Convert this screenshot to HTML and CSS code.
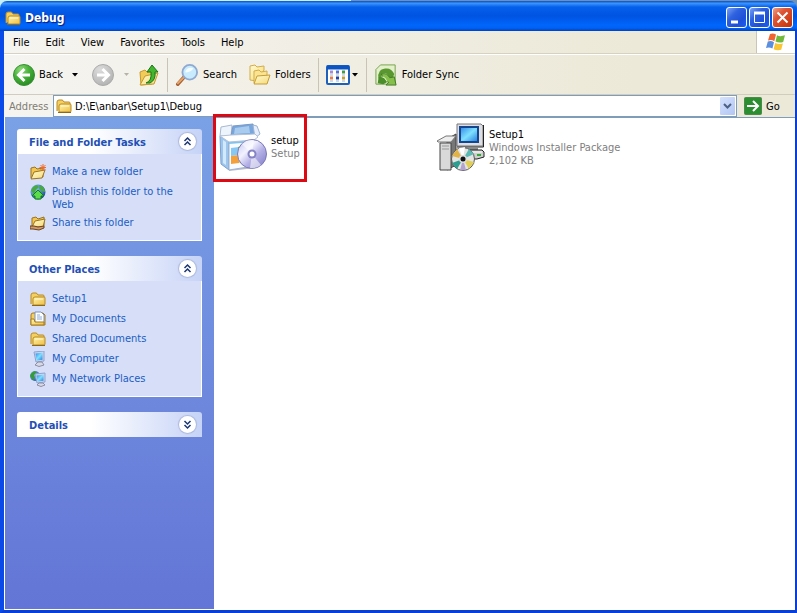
FILE: index.html
```html
<!DOCTYPE html>
<html lang="en">
<head>
<meta charset="utf-8">
<title>Debug</title>
<link rel="stylesheet" href="styles.css">
</head>
<body>
<svg class="defs" aria-hidden="true">
  <defs>
    <linearGradient id="gold" x1="0" y1="0" x2="1" y2="1"><stop offset="0" stop-color="#fff3a8"/><stop offset="1" stop-color="#eebf45"/></linearGradient>
    <linearGradient id="pale" x1="0" y1="0" x2="1" y2="1"><stop offset="0" stop-color="#fffbd0"/><stop offset="1" stop-color="#f5d977"/></linearGradient>
    <radialGradient id="green" cx=".35" cy=".25" r=".8"><stop offset="0" stop-color="#8edb78"/><stop offset=".5" stop-color="#46b038"/><stop offset="1" stop-color="#268a22"/></radialGradient>
    <radialGradient id="grey" cx=".35" cy=".25" r=".8"><stop offset="0" stop-color="#dcdcdc"/><stop offset="1" stop-color="#b2b2b2"/></radialGradient>
    <radialGradient id="globe" cx=".3" cy=".3" r=".8"><stop offset="0" stop-color="#8fd0ff"/><stop offset="1" stop-color="#1b4c9c"/></radialGradient>
    <linearGradient id="screen" x1="0" y1="0" x2="1" y2="1"><stop offset="0" stop-color="#2f86e8"/><stop offset=".5" stop-color="#7fe0ff"/><stop offset="1" stop-color="#2078dc"/></linearGradient>
    <linearGradient id="disc" x1="0" y1="0" x2="1" y2="1"><stop offset="0" stop-color="#c3c2ee"/><stop offset=".35" stop-color="#f2f2ff"/><stop offset=".6" stop-color="#b4b0e6"/><stop offset="1" stop-color="#7d79c4"/></linearGradient>
    <symbol id="folder" viewBox="0 0 16 16">
      <path d="M1 13V4q0-2 2-2h3q1 0 2 2h5q1 0 1 1v2" fill="#f5cf60" stroke="#b98a25"/>
      <path d="M3 14V8q0-2 2-2h9q1 0 1 1v6q0 1-1 1z" fill="url(#gold)" stroke="#b98a25"/>
      <path d="M2 14.500h13" stroke="#8d6a1a"/>
      <path d="M5 8h8" stroke="#fffbd8"/>
    </symbol>
    <symbol id="computer" viewBox="0 0 16 16">
      <path d="M4 1l10-1v10l-8 1z" fill="#c8d5ee" stroke="#8ea2d0"/>
      <path d="M5.500 2.500l7-.7v7l-6 .8z" fill="url(#screen)"/>
      <path d="M8 11h4l2 3-5 1.500-4-1.500z" fill="#d8d9e6" stroke="#8d8da5"/>
    </symbol>
  </defs>
</svg>

<div class="window">
  <header class="titlebar">
    <svg class="i16"><use href="#folder"/></svg>
    <h1>Debug</h1>
    <div class="controls">
      <button class="ctl" aria-label="Minimize"><svg viewBox="0 0 19 19"><path d="M4 14h7" stroke="#fff" stroke-width="3"/></svg></button>
      <button class="ctl" aria-label="Maximize"><svg viewBox="0 0 19 19"><path d="M4.500 5v9.500h10V5" fill="none" stroke="#fff"/><path d="M4 5h11" stroke="#fff" stroke-width="3"/></svg></button>
      <button class="ctl close" aria-label="Close"><svg viewBox="0 0 19 19"><path d="M4.500 4.500l10 10M14.500 4.500l-10 10" stroke="#fff" stroke-width="2"/></svg></button>
    </div>
  </header>

  <div class="frame">
    <nav class="menubar" aria-label="Menu">
      <button>File</button><button>Edit</button><button>View</button><button>Favorites</button><button>Tools</button><button>Help</button>
      <div class="brand">
        <svg viewBox="0 0 20 18">
          <path d="M4 1q3-1.500 6 .6L8.300 8.200Q5.500 6 2 7.500z" fill="#ef6430"/>
          <path d="M11 2.200Q14 4 19 2.300L17.200 9q-4 1.300-7.700-.4z" fill="#71b93a"/>
          <path d="M1.800 8.600Q5 7.300 8 9.300L6.400 15.600Q3.500 13.800 0 15z" fill="#5a8fe0"/>
          <path d="M9.200 9.900q3.500 1.800 7.700.6L15.200 16.800q-4 1.200-7.600-.6z" fill="#f8c537"/>
        </svg>
      </div>
    </nav>

    <div class="toolbar" role="toolbar" aria-label="Standard buttons">
      <button class="tool"><svg class="i22" viewBox="0 0 22 22"><circle cx="11" cy="11" r="10.500" fill="url(#green)" stroke="#3a8f35"/><path d="M17 11H6M11.500 5L5.500 11l6 6" fill="none" stroke="#fff" stroke-width="3"/></svg>Back</button>
      <button class="drop" aria-label="Back history"><svg class="arrow" viewBox="0 0 7 4"><path d="M0 0h6L3 3.500z" fill="#000"/></svg></button>
      <button class="tool forward" aria-label="Forward" disabled><svg class="i22" viewBox="0 0 22 22"><circle cx="11" cy="11" r="10.500" fill="url(#grey)" stroke="#aaa"/><path d="M5 11h11M10.500 5l6 6-6 6" fill="none" stroke="#fff" stroke-width="3"/></svg></button>
      <button class="drop" aria-label="Forward history" disabled><svg class="arrow" viewBox="0 0 7 4"><path d="M1 0h5L3.500 3z" fill="#b5b3a8"/></svg></button>
      <button class="tool" aria-label="Up"><svg class="i22" viewBox="0 0 22 22"><path d="M2 8l5-2 2 2 8-1-3 13-11 1z" fill="#f1cc58" stroke="#c6992d"/><path d="M2 21l5-9 13-3-4 11z" fill="url(#pale)" stroke="#c6992d"/><path d="M8 19q6-2 5-11h-4L14 1l6 7h-3q1 8-5 11z" fill="#43b52f" stroke="#187617"/></svg></button>
      <span class="sep"></span>
      <button class="tool"><svg class="i24" viewBox="0 0 24 24"><path d="M9 14l-7 8" stroke="#a66032" stroke-width="4" stroke-linecap="round"/><path d="M9 14l-7 7" stroke="#e6a66b" stroke-width="2" stroke-linecap="round"/><circle cx="15" cy="9" r="8" fill="#c8ebfd" stroke="#8fa9d0" stroke-width="2"/><path d="M10 9q1-5 6-5 2 0 3 1-4 5-9 4z" fill="#f6fdff"/></svg>Search</button>
      <button class="tool folders"><svg class="i22" viewBox="0 0 22 22"><path d="M1 16V2l5-1 2 2 7-1v4l-7 11z" fill="url(#pale)" stroke="#d3ac48"/><path d="M5 19V7l5-1 2 2 6-1v4l-7 8z" fill="#fae491" stroke="#d3ac48"/><path d="M5 20l3-8 13-1-3 9z" fill="url(#pale)" stroke="#c79d36"/></svg>Folders</button>
      <span class="sep"></span>
      <button class="tool views" aria-label="Views"><svg class="i24" viewBox="0 0 24 20"><rect x="1" y="1" width="22" height="18" rx="1" fill="#fff" stroke="#1e61bb" stroke-width="2"/><path d="M1 2.500h22" stroke="#0c54c4" stroke-width="4"/><path d="M4 7h3" stroke="#a48bd2" stroke-width="3"/><path d="M10 7h3" stroke="#5970d0" stroke-width="3"/><path d="M16 7h3" stroke="#3f9d45" stroke-width="3"/><path d="M4 13h3" stroke="#e37d56" stroke-width="3"/><path d="M10 13h3" stroke="#2442a4" stroke-width="3"/><path d="M16 13h3" stroke="#bda13c" stroke-width="3"/><path d="M4 10h3m3 0h3m3 0h3M4 16h3m3 0h3m3 0h3" stroke="#9fb3c5"/></svg><svg class="arrow" viewBox="0 0 7 4"><path d="M0 0h6L3 3.500z" fill="#000"/></svg></button>
      <span class="sep"></span>
      <button class="tool"><svg class="i24" viewBox="0 0 24 24"><path d="M1 22V6l5-5h16v21z" fill="#e4efcc" stroke="#6d9f43"/><path d="M4 16q-2-10 7-11 7-1 10 6l-2 5-4-2q-2-5-6-4-3 1-1 7z" fill="#58982f"/><path d="M7 11q6-2 9 4l5-1 2 9H12l3-3q-5-1-8-9z" fill="#86bf4b" stroke="#3e7722"/><path d="M3 21l1-7 5 1 4 5-4 2z" fill="#4a8d2a"/><path d="M8 14q3 0 5 5" fill="none" stroke="#e8f6cf"/></svg>Folder Sync</button>
    </div>

    <form class="address" onsubmit="return false">
      <label for="path">Address</label>
      <div class="combo">
        <svg class="i16"><use href="#folder"/></svg>
        <input id="path" type="text" value="D:\E\anbar\Setup1\Debug">
        <button type="button" class="open" aria-label="Show addresses"><svg viewBox="0 0 9 6"><path d="M1 1l3.500 3.500L8 1" fill="none" stroke="#4d6185" stroke-width="2"/></svg></button>
      </div>
      <button class="go"><svg viewBox="0 0 18 18"><rect x=".5" y=".5" width="17" height="17" rx="1" fill="#2b8e30" stroke="#4d8b4d"/><path d="M3 9h11M9 4l5 5-5 5" fill="none" stroke="#fff" stroke-width="2"/></svg>Go</button>
    </form>

    <div class="content">
      <aside class="sidebar">
        <section class="panel">
          <div class="head"><h2>File and Folder Tasks</h2><button class="toggle" aria-label="Collapse tasks"><svg viewBox="0 0 17 17"><path d="M5.500 8l3-3 3 3M5.500 12l3-3 3 3" fill="none" stroke="#1b3672" stroke-width="1.500"/></svg></button></div>
          <ul>
            <li><svg class="i16" viewBox="0 0 16 16"><path d="M1 14V4l4-1 2 2 6-1v9z" fill="#f3c64f" stroke="#9b7323"/><path d="M1 15l3-7 11-2-3 8z" fill="url(#pale)" stroke="#9b7323"/><path d="M13 0v7M9.500 3.500h7M10.500 1l5 5m0-5l-5 5" stroke="#ef6b29"/></svg><a href="#">Make a new folder</a></li>
            <li><svg class="i16" viewBox="0 0 16 16"><circle cx="8" cy="8" r="7.500" fill="url(#globe)"/><path d="M1 7q1-5 6-6l2 2-3 3-2 4zM10 1q5 2 5 7l-4-1-2-3z" fill="#49a945"/><path d="M8 6l6 6h-3v3H5v-3H2z" fill="#5cdb4b" stroke="#117a19"/></svg><a href="#">Publish this folder to the Web</a></li>
            <li><svg class="i16" viewBox="0 0 16 16"><path d="M2 11V3l4-1 2 2 6-2v9z" fill="#f3c64f" stroke="#9b7323"/><path d="M2 12l3-6 10-2-2 8z" fill="url(#pale)" stroke="#9b7323"/><path d="M0 11h4l4 1 6-1v2l-5 2-6-1H0z" fill="#d29a65" stroke="#674125"/></svg><a href="#">Share this folder</a></li>
          </ul>
        </section>
        <section class="panel">
          <div class="head"><h2>Other Places</h2><button class="toggle" aria-label="Collapse places"><svg viewBox="0 0 17 17"><path d="M5.500 8l3-3 3 3M5.500 12l3-3 3 3" fill="none" stroke="#1b3672" stroke-width="1.500"/></svg></button></div>
          <ul>
            <li><svg class="i16"><use href="#folder"/></svg><a href="#">Setup1</a></li>
            <li><svg class="i16" viewBox="0 0 16 16"><path d="M1 14V4q0-2 2-2h10l2 2v10z" fill="#f5cf60" stroke="#a87a1c"/><path d="M5 12V1h6l3 3v8z" fill="#fff" stroke="#7892bf"/><path d="M7 4h3M7 6h5M7 8h5" stroke="#8da9d8"/><path d="M1 14V8h3l1 3h9v3z" fill="url(#gold)" stroke="#a87a1c"/></svg><a href="#">My Documents</a></li>
            <li><svg class="i16"><use href="#folder"/></svg><a href="#">Shared Documents</a></li>
            <li><svg class="i16"><use href="#computer"/></svg><a href="#">My Computer</a></li>
            <li><svg class="i16" viewBox="0 0 16 16"><circle cx="5" cy="5" r="5" fill="url(#globe)"/><path d="M0 5q1-4 5-5l2 2-3 2 1 3-2 2z" fill="#369c3a"/><path d="M5 3l10-1v9l-8 1z" fill="#c8d5ee" stroke="#8ea2d0"/><path d="M6.500 4.500l7-.7v6l-6 .8z" fill="url(#screen)"/><path d="M9 12h4l2 2-4 1.500L7 14z" fill="#d8d9e6" stroke="#8d8da5"/></svg><a href="#">My Network Places</a></li>
          </ul>
        </section>
        <section class="panel">
          <div class="head"><h2>Details</h2><button class="toggle" aria-label="Expand details"><svg viewBox="0 0 17 17"><path d="M5.500 5l3 3 3-3M5.500 9l3 3 3-3" fill="none" stroke="#1b3672" stroke-width="1.500"/></svg></button></div>
        </section>
      </aside>

      <main class="files">
        <a class="file marked" href="#">
          <svg class="i48" viewBox="0 0 48 48">
            <path d="M10 47l26-3 2-2" fill="none" stroke="#b8bcc6" stroke-width="2"/>
            <path d="M1 13l9 5v29l-8-6z" fill="#9cc6ee" stroke="#7d9fcf"/>
            <path d="M4 17l3 2v23l-3-2z" fill="#d2e8fb"/>
            <path d="M10 17l25-2v28l-25 4z" fill="#f8fbff" stroke="#9db4d4"/>
            <path d="M10 18l25-2v3l-25 2z" fill="#7fc3ec"/>
            <path d="M1 13L2 4l11-2-1 11z" fill="#eef4fb" stroke="#a7b9d3"/>
            <path d="M12 13l2-10 20-2 2 11z" fill="#78a7de" stroke="#7b99c4"/>
            <path d="M15 11l1-6 14-2 1 7z" fill="#a9cbee"/>
            <path d="M34 2l4 1 3 8-5 4z" fill="#e5eefa" stroke="#9db4d4"/>
            <path d="M1 13l11-1 24-1 3 3-4 3-25 2z" fill="#fff" stroke="#b3c2d9"/>
            <path d="M12 25l8-1v8l-8 1z" fill="#86c8f1"/><path d="M19 24q5-2 10 0v9l-10 1z" fill="#55b441"/>
            <path d="M12 33l8-1v8l-8 1z" fill="#f3a03b"/><path d="M20 33l9-1v7l-9 1z" fill="#f5d24c"/>
            <circle cx="33" cy="31" r="14.500" fill="url(#disc)" stroke="#7a79b5"/>
            <path d="M33 31L23 21q5-5 12-4zM33 31l9 11q-5 4-11 3z" fill="#fff" opacity=".55"/>
            <circle cx="33" cy="31" r="4.500" fill="#8583c4"/><circle cx="33" cy="31" r="2.500" fill="#fff"/>
          </svg>
          <span class="label"><span class="name">setup</span><span>Setup</span></span>
        </a>
        <a class="file" href="#">
          <svg class="i48" viewBox="0 0 48 48">
            <path d="M20 1h24l2 2v20H20z" fill="#dfdfe2" stroke="#77777f"/>
            <path d="M46.500 2v22H20" fill="none" stroke="#222"/>
            <rect x="23" y="4" width="18" height="15" fill="url(#screen)" stroke="#164590" stroke-width="2"/>
            <path d="M29 24h12v3H29z" fill="#888"/>
            <path d="M18 27h27l2 2v5l-7 2H18z" fill="#cfcfcf" stroke="#222"/><path d="M20 29h25" stroke="#fff"/><path d="M40 32h4" stroke="#3a3" stroke-width="2"/>
            <path d="M10 16l9-5v31l-9 5z" fill="#777" stroke="#444"/>
            <path d="M3 20h11v27H3z" fill="#d9d9d9" stroke="#444"/>
            <path d="M0 18l9-5h10l-5 6H1z" fill="#eee" stroke="#777"/>
            <path d="M5 23h7M5 26h7" stroke="#999"/>
            <circle cx="26" cy="36" r="11.500" fill="#e4e5e2" stroke="#555"/>
            <path d="M26 36L15 33l5-7z" fill="#e1b347"/><path d="M26 36l-4-11 6-1z" fill="#fff"/><path d="M26 36l6-10 5 5z" fill="#5bb9b2"/><path d="M26 36l11 3-5 7z" fill="#e1cf55"/><path d="M26 36l-6 10-5-6z" fill="#2c9d91"/><path d="M26 36l3 11-6 .5z" fill="#b2a4ce"/>
            <circle cx="26" cy="36" r="4" fill="#ddd"/><circle cx="26" cy="36" r="2.500" fill="#111"/>
          </svg>
          <span class="label"><span class="name">Setup1</span><span>Windows Installer Package</span><span>2,102 KB</span></span>
        </a>
      </main>
    </div>
  </div>
</div>
</body>
</html>
```
FILE: styles.css
```css
*, *::after { box-sizing: border-box; }

body {
  margin: 0;
  font: 11px/13px Tahoma, "DejaVu Sans Condensed", "DejaVu Sans", sans-serif;
  color: #000;
  background: linear-gradient(90deg, #c5f0fa 44%, #6f91b5 44%);
}

button {
  display: flex;
  align-items: center;
  padding: 0;
  border: 0;
  background: none;
  color: inherit;
  font: inherit;
}

a { color: inherit; text-decoration: none; }
h1, h2, ul { margin: 0; padding: 0; }
svg { display: block; flex: none; }

.defs { position: absolute; width: 0; height: 0; }
.i16 { width: 16px; height: 16px; }
.i22 { width: 22px; height: 22px; }
.i24 { width: 24px; height: 22px; }
.i48 { width: 48px; height: 48px; }
.arrow { width: 7px; height: 4px; }

.window {
  display: flex;
  flex-direction: column;
  min-height: 100vh;
  padding-top: 1px;
}

.titlebar {
  display: flex;
  align-items: center;
  gap: 4px;
  height: 30px;
  padding: 3px 4px 0 5px;
  border-radius: 7px 7px 0 0;
  background: linear-gradient(#0a4fc4, #3a94ff 8%, #0560ea 20%, #0053e1 50%, #0066fb 80%, #0062f5 90%, #0040c0);
}

.titlebar h1 {
  flex: 1;
  color: #fff;
  font-size: 12px;
  line-height: 16px;
  text-shadow: 1px 1px 1px #0a1883;
}

.controls { display: flex; gap: 2px; }

.ctl {
  width: 21px;
  height: 21px;
  border: 1px solid #fff;
  border-radius: 3px;
  background: linear-gradient(135deg, #7ba2f5, #2f62df 35%, #1d50d8 70%, #1b5ff0);
}

.ctl svg { width: 19px; height: 19px; }
.close { background: linear-gradient(135deg, #f0a085, #de5535 35%, #cf3d17 75%, #b93411); }

.frame {
  display: flex;
  flex: 1;
  flex-direction: column;
  border: solid #0a3fd6;
  border-width: 0 2px 3px 4px;
  border-left-color: #0a4ae8;
  background: linear-gradient(90deg, #f5f4f0, #ece9d8 80%);
}

.menubar {
  display: flex;
  height: 23px;
  padding-left: 1px;
  border-bottom: 1px solid #d5d2c4;
}

.menubar button { padding: 0 8px; }

.brand {
  display: flex;
  align-items: center;
  justify-content: center;
  width: 39px;
  margin-left: auto;
  border-left: 1px solid #c9c6b7;
  background: #fff;
}

.brand svg { width: 20px; height: 18px; }

.toolbar {
  display: flex;
  align-items: center;
  height: 41px;
  padding-left: 9px;
  border-top: 1px solid #fff;
  border-bottom: 1px solid #d0cdbf;
}

.tool { gap: 4px; }
.drop { justify-content: center; width: 24px; height: 22px; }
.forward { margin-left: 5px; }
.folders { margin-left: 12px; }
.views { gap: 2px; }

.sep {
  width: 1px;
  height: 34px;
  margin: 0 7px;
  background: #c8c5b5;
}

.address {
  display: flex;
  align-items: center;
  height: 22px;
  padding-left: 5px;
}

.address label { width: 44px; color: #7f7d73; }

.combo {
  display: flex;
  flex: 1;
  align-items: center;
  gap: 3px;
  height: 22px;
  padding: 1px 1px 1px 2px;
  border: 1px solid #7f9db9;
  background: #fff;
}

.combo input {
  flex: 1;
  min-width: 0;
  padding: 0;
  border: 0;
  outline: 0;
  background: none;
  font: inherit;
}

.open {
  justify-content: center;
  width: 15px;
  height: 18px;
  border-radius: 1px;
  background: linear-gradient(135deg, #d6e2fd, #b2c6f4);
}

.open svg { width: 9px; height: 6px; }
.go { gap: 4px; width: 58px; padding-left: 7px; }
.go svg { width: 18px; height: 18px; }

.content {
  display: flex;
  flex: 1;
  border: solid #fff;
  border-width: 0 0 1px 1px;
}

.sidebar {
  display: flex;
  flex: none;
  flex-direction: column;
  gap: 15px;
  width: 209px;
  padding: 12px;
  background: linear-gradient(#7aa1e6, #6375d6);
}

.head {
  display: flex;
  align-items: center;
  justify-content: space-between;
  height: 25px;
  padding: 0 6px 0 12px;
  border-radius: 3px 3px 0 0;
  background: linear-gradient(90deg, #fff 40%, #c6d3f7);
}

.head h2 {
  padding-top: 2px;
  color: #1f50b5;
  font-size: 11px;
  line-height: 13px;
}

.toggle {
  border-radius: 50%;
  background: #fff;
  box-shadow: 0 0 1px 1px #aab8dc;
}

.toggle svg { width: 17px; height: 17px; }

.panel ul {
  display: flex;
  flex-direction: column;
  gap: 4px;
  padding: 10px 12px 9px;
  border: solid #fff;
  border-width: 0 1px 1px;
  background: #d6dff7;
  list-style: none;
}

.panel li {
  display: flex;
  gap: 6px;
  min-height: 16px;
}

.panel a {
  padding-top: 1px;
  color: #215dc6;
}

.files {
  display: grid;
  flex: 1;
  grid-template-columns: repeat(auto-fill, 218px);
  align-content: start;
  padding: 5px;
  border-top: 1px solid #7f9db9;
  background: #fff;
}

.file {
  position: relative;
  display: flex;
  align-items: center;
  gap: 4px;
  height: 48px;
  color: #808080;
}

.label { display: flex; flex-direction: column; white-space: nowrap; }
.name { color: #000; }

.marked::after {
  position: absolute;
  top: -9px;
  left: -6px;
  width: 94px;
  height: 68px;
  border: 3px solid #dd0a14;
  content: "";
}
```
